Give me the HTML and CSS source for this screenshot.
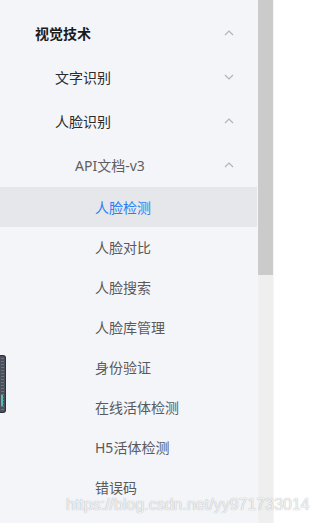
FILE: index.html
```html
<!DOCTYPE html>
<html lang="zh-CN">
<head>
    <meta charset="UTF-8">
    <meta name="viewport" content="width=device-width, initial-scale=1.0">
    <title>视觉技术 - 文档</title>
    <link rel="stylesheet" href="styles.css">
</head>
<body>
    <div class="page">
        <aside class="sidebar">
            <ul class="menu">
                <li class="menu-item level-1 bold">
                    <span>视觉技术</span>
                    <svg class="arrow" width="10" height="6" viewBox="0 0 10 6"><polyline points="1,5 5,1 9,5"/></svg>
                </li>
                <li class="menu-item level-2">
                    <span>文字识别</span>
                    <svg class="arrow" width="10" height="6" viewBox="0 0 10 6"><polyline points="1,1 5,5 9,1"/></svg>
                </li>
                <li class="menu-item level-2">
                    <span>人脸识别</span>
                    <svg class="arrow" width="10" height="6" viewBox="0 0 10 6"><polyline points="1,5 5,1 9,5"/></svg>
                </li>
                <li class="menu-item level-3">
                    <span>API文档-v3</span>
                    <svg class="arrow" width="10" height="6" viewBox="0 0 10 6"><polyline points="1,5 5,1 9,5"/></svg>
                </li>
                <li class="leaf active">人脸检测</li>
                <li class="leaf">人脸对比</li>
                <li class="leaf">人脸搜索</li>
                <li class="leaf">人脸库管理</li>
                <li class="leaf">身份验证</li>
                <li class="leaf">在线活体检测</li>
                <li class="leaf">H5活体检测</li>
                <li class="leaf">错误码</li>
            </ul>
        </aside>
        <div class="scrollbar">
            <div class="thumb"></div>
        </div>
        <main class="content"></main>
    </div>

    <div class="device"></div>
    <div class="watermark">https://blog.csdn.net/yy971733014</div>
</body>
</html>
```

FILE: styles.css
```css
* {
    margin: 0;
    padding: 0;
    box-sizing: border-box;
}

body {
    font-family: "Noto Sans", "Noto Sans CJK SC", sans-serif;
    background: #fff;
    height: 523px;
    overflow: hidden;
    position: relative;
}

.page {
    display: flex;
    height: 523px;
}

.sidebar {
    width: 257px;
    flex-shrink: 0;
    background: #f4f5f9;
    overflow: hidden;
}

.menu {
    list-style: none;
    padding-top: 11px;
}

.menu-item {
    height: 44px;
    display: flex;
    align-items: center;
    justify-content: space-between;
    padding-right: 23px;
    font-size: 14px;
    color: #2b2b2b;
}

.menu-item.bold {
    font-weight: 700;
    color: #1a1a1a;
}

.level-1 { padding-left: 35px; }
.level-2 { padding-left: 55px; }
.level-3 { padding-left: 75px; color: #5f5f5f; }

.arrow {
    fill: none;
    stroke: #b4b4b4;
    stroke-width: 1.2;
}

.leaf {
    height: 40px;
    display: flex;
    align-items: center;
    padding-left: 95px;
    font-size: 14px;
    color: #5a5a5a;
}

.leaf.active {
    background: #e6e7eb;
    color: #2f7df6;
}

.scrollbar {
    width: 17px;
    flex-shrink: 0;
    background: #efefef;
    border-left: 1px solid #f6f6f6;
    border-right: 1px solid #f6f6f6;
}

.thumb {
    height: 275px;
    background: #cbcbcb;
}

.content {
    flex-grow: 1;
    background: #fff;
}

.device {
    position: absolute;
    left: 0;
    top: 355px;
    width: 6px;
    height: 58px;
    background: #4a505c;
    border: 1px solid #2e323a;
    border-left: none;
    border-radius: 0 3px 3px 0;
    background-image:
        linear-gradient(to bottom, transparent 70%, #5fc39a 70%, #47b6c9 90%, transparent 90%),
        repeating-linear-gradient(to bottom, #4a505c 0, #4a505c 2px, #6d7380 2px, #6d7380 3px);
    background-size: 2px 100%, 3px 100%;
    background-position: 1px 0, 1px 0;
    background-repeat: no-repeat;
}

.watermark {
    position: absolute;
    left: 66px;
    top: 496px;
    font-family: "Liberation Sans", Arial, sans-serif;
    font-size: 16px;
    color: rgba(255, 255, 255, 0.85);
    text-shadow: 0 0 1px rgba(110, 110, 110, 0.7);
    white-space: nowrap;
}
```
